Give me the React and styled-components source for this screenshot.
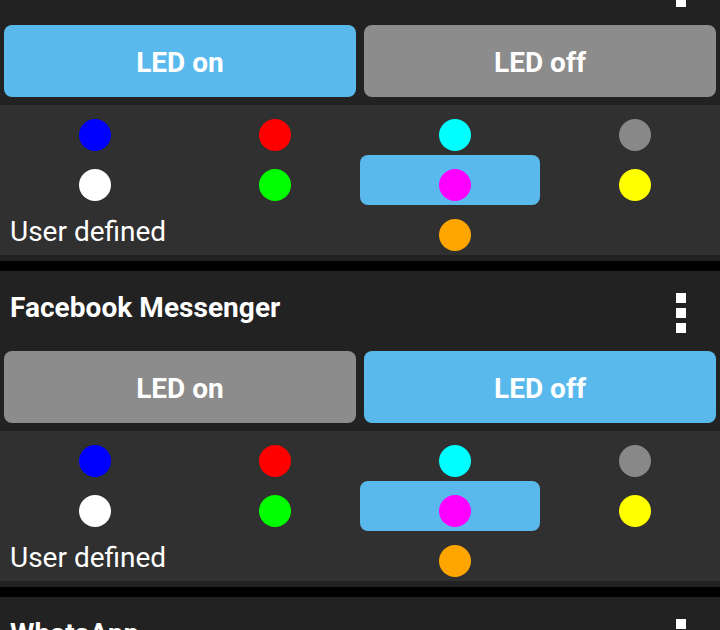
import React from 'react'
import styled, { createGlobalStyle } from 'styled-components'

const GlobalStyle = createGlobalStyle`
  html, body {
    margin: 0;
    padding: 0;
    background: #222222;
    overflow: hidden;
  }
  body {
    font-family: Roboto, "Liberation Sans", sans-serif;
    color: #ffffff;
  }
`;

const List = styled.div`
  margin-top: -55px;
  display: flex;
  flex-direction: column;
`;

const Card = styled.div`
  background: #222222;
  padding-bottom: 6px;
  border-bottom: 10px solid #000000;
`;

const Header = styled.div`
  height: 72px;
  display: flex;
  align-items: center;
  justify-content: space-between;
  padding: 0 34px 0 10px;
`;

const Title = styled.div`
  font-size: 28px;
  font-weight: 700;
  letter-spacing: 0.05px;
`;

const Kebab = styled.div`
  display: flex;
  flex-direction: column;
  gap: 5px;
  margin-top: 12px;
  & > span {
    width: 10px;
    height: 10px;
    background: #ffffff;
  }
`;

const Buttons = styled.div`
  display: grid;
  grid-template-columns: 1fr 1fr;
  gap: 8px;
  padding: 8px 4px;
`;

const LedButton = styled.button`
  height: 72px;
  border: none;
  border-radius: 8px;
  background: ${props => props.active ? '#5ab9ec' : '#8c8c8c'};
  color: #ffffff;
  font-family: Roboto, "Liberation Sans", sans-serif;
  font-size: 28px;
  font-weight: 700;
  padding: 2px 0 0;
`;

const Grid = styled.div`
  display: grid;
  grid-template-columns: repeat(4, 1fr);
  grid-auto-rows: 50px;
  background: #303030;
`;

const Cell = styled.div`
  display: flex;
  align-items: center;
  justify-content: center;
  padding: 10px 0 0 10px;
  border-radius: 8px;
  background: ${props => props.selected ? '#5ab9ec' : 'transparent'};
`;

const Dot = styled.span`
  width: 32px;
  height: 32px;
  border-radius: 50%;
  background: ${props => props.color};
`;

const UserDefined = styled.div`
  display: flex;
  align-items: center;
  padding-left: 10px;
  padding-top: 2px;
  font-size: 28px;
  white-space: nowrap;
`;

const colors = ['#0000ff', '#ff0000', '#00ffff', '#888888', '#ffffff', '#00ff00', '#ff00ff', '#ffff00'];

const apps = [
  { name: 'SMS', ledOn: true },
  { name: 'Facebook Messenger', ledOn: false },
  { name: 'WhatsApp', ledOn: true },
];

const AppCard = ({ app }) => (
  <Card>
    <Header>
      <Title>{app.name}</Title>
      <Kebab><span /><span /><span /></Kebab>
    </Header>
    <Buttons>
      <LedButton active={app.ledOn}>LED on</LedButton>
      <LedButton active={!app.ledOn}>LED off</LedButton>
    </Buttons>
    <Grid>
      {colors.map((c, i) => (
        <Cell key={i} selected={c === '#ff00ff'}>
          <Dot color={c} />
        </Cell>
      ))}
      <UserDefined>User defined</UserDefined>
      <Cell />
      <Cell><Dot color="#ffa500" /></Cell>
      <Cell />
    </Grid>
  </Card>
);

const App = () => (
  <>
    <GlobalStyle />
    <List>
      {apps.map(a => <AppCard key={a.name} app={a} />)}
    </List>
  </>
);

export default App
